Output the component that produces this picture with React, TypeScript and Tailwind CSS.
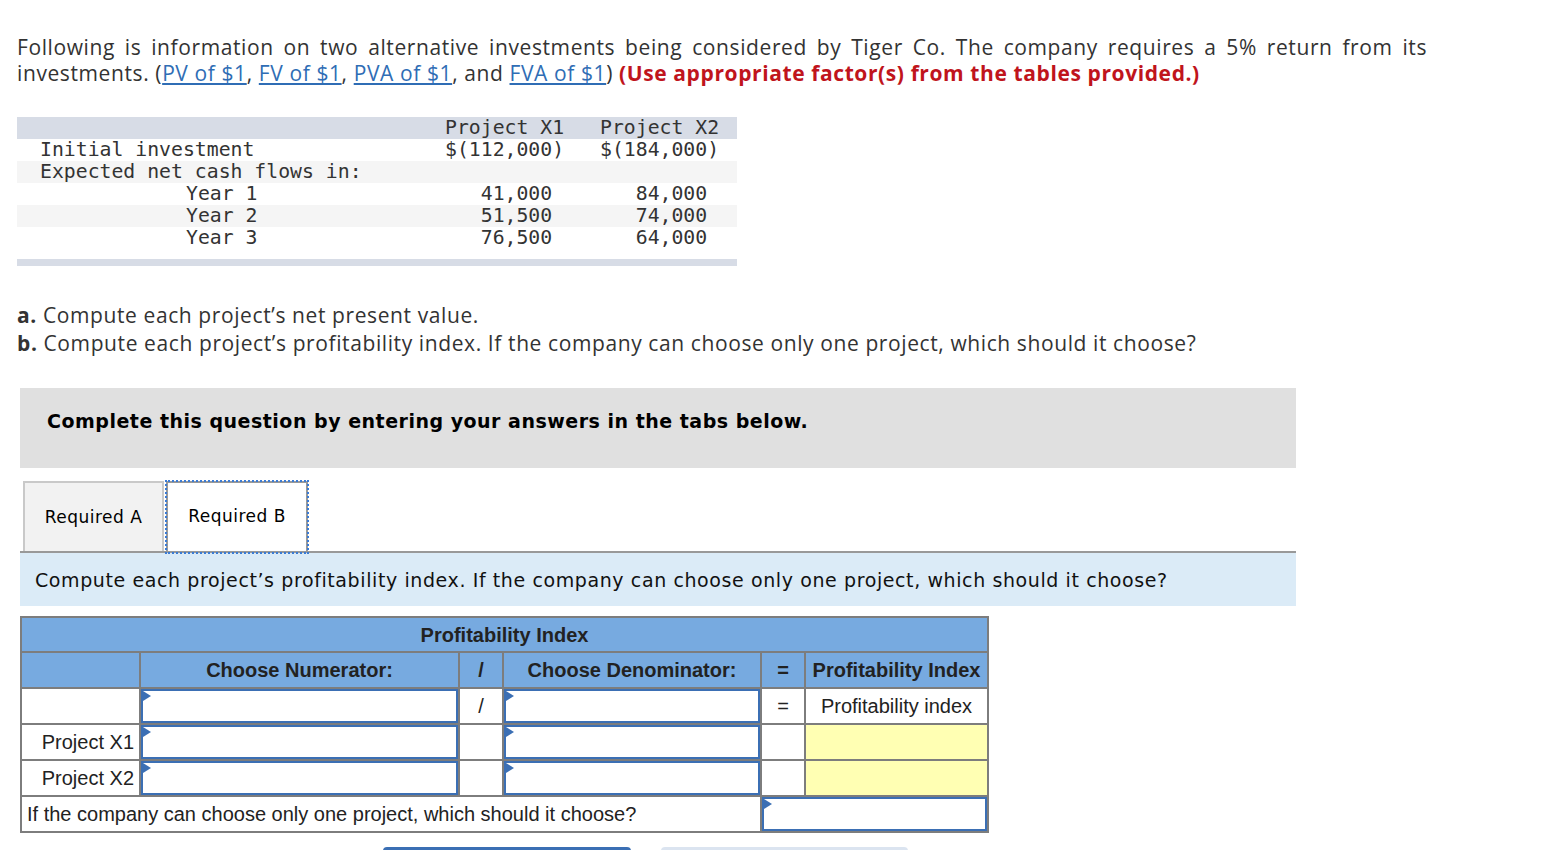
// Tiger Co. investments question - Required B tab

const rows = [
  { label: 'Initial investment', indent: 'pl-[23px]', x1: '$(112,000)', x2: '$(184,000)', bg: 'bg-white' },
  { label: 'Expected net cash flows in:', indent: 'pl-[23px]', x1: '', x2: '', bg: 'bg-[#f5f5f5]' },
  { label: 'Year 1', indent: 'pl-[169px]', x1: '   41,000', x2: '   84,000', bg: 'bg-white' },
  { label: 'Year 2', indent: 'pl-[169px]', x1: '   51,500', x2: '   74,000', bg: 'bg-[#f5f5f5]' },
  { label: 'Year 3', indent: 'pl-[169px]', x1: '   76,500', x2: '   64,000', bg: 'bg-white' },
];

function Pick({ className = '' }: { className?: string }) {
  return (
    <div className={`relative h-[34px] border-2 border-[#3b6fb4] bg-white ${className}`}>
      <span className="absolute left-0 top-0 w-0 h-0 border-y-[5px] border-y-transparent border-l-[8px] border-l-[#3b6fb4]" />
    </div>
  );
}

export default function App() {
  return (
    <div className="h-[850px] overflow-hidden bg-white pl-[17px] pt-[34px] text-[#333]">
      {/* question text */}
      <div className="w-[1410px] [font-family:'Open_Sans',sans-serif] text-[21px] leading-[26px] tracking-[0.6px]">
        <div className="text-justify [text-align-last:justify]">
          Following is information on two alternative investments being considered by Tiger Co. The company requires a 5% return from its
        </div>
        <div>
          investments. (<a className="text-[#2f6db5] underline">PV of $1</a>, <a className="text-[#2f6db5] underline">FV of $1</a>,{' '}
          <a className="text-[#2f6db5] underline">PVA of $1</a>, and <a className="text-[#2f6db5] underline">FVA of $1</a>){' '}
          <span className="font-bold text-[#c0141c]">(Use appropriate factor(s) from the tables provided.)</span>
        </div>
      </div>

      {/* data table */}
      <div className="mt-[31px] w-[720px] [font-family:'DejaVu_Sans_Mono',monospace] text-[19.8px] leading-[22px] text-[#333] whitespace-pre">
        <div className="flex h-[22px] bg-[#d7dce6]">
          <div className="w-[428px]" />
          <div className="w-[155px]">Project X1</div>
          <div className="flex-1">Project X2</div>
        </div>
        {rows.map((r) => (
          <div key={r.label} className={`flex h-[22px] ${r.bg}`}>
            <div className={`w-[428px] ${r.indent}`}>{r.label}</div>
            <div className="w-[155px]">{r.x1}</div>
            <div className="flex-1">{r.x2}</div>
          </div>
        ))}
        <div className="h-[10px]" />
        <div className="h-[7px] bg-[#d7dce6]" />
      </div>

      {/* parts */}
      <div className="mt-[35px] [font-family:'Open_Sans',sans-serif] text-[21px] leading-[28px] tracking-[0.6px]">
        <p><b>a.</b> Compute each project’s net present value.</p>
        <p><b>b.</b> Compute each project’s profitability index. If the company can choose only one project, which should it choose?</p>
      </div>

      {/* answer area */}
      <div className="ml-[3px] w-[1276px] mt-[31px] [font-family:'DejaVu_Sans',Verdana,sans-serif] text-black">
        <div className="h-[80px] bg-[#e0e0e0] pl-[27px] pt-[23px] font-bold text-[19px] leading-[20px] tracking-[0.5px]">
          Complete this question by entering your answers in the tabs below.
        </div>

        <div className="mt-[13px] flex items-end pl-[3px] border-b-2 border-[#999]">
          <div className="w-[141px] h-[70px] bg-[#f2f2f2] border-2 border-b-0 border-[#c9c9c9] flex items-center justify-center pt-[2px] text-[17px] tracking-[0.5px]">
            Required A
          </div>
          <div className="ml-[2px] w-[142px] h-[72px] -mb-[2px] outline-2 outline-dotted outline-[#3a7bd5] -outline-offset-1 border-2 border-[#999] bg-white flex items-center justify-center text-[17px] tracking-[0.5px]">
            Required B
          </div>
        </div>

        <div className="h-[53px] bg-[#dbebf7] pl-[15px] flex items-center pt-[2px] text-[19px] tracking-[0.6px] text-[#111]">
          Compute each project’s profitability index. If the company can choose only one project, which should it choose?
        </div>
      </div>

      {/* profitability index table */}
      <table className="ml-[3px] mt-[10px] w-[967px] table-fixed border-collapse border-2 border-[#7d7d7d] [font-family:'Liberation_Sans',Arial,sans-serif] text-[20px] text-[#222]">
        <colgroup>
          <col className="w-[119px]" />
          <col className="w-[319px]" />
          <col className="w-[44px]" />
          <col className="w-[258px]" />
          <col className="w-[44px]" />
          <col className="w-[183px]" />
        </colgroup>
        <tbody>
          <tr className="h-[35px] bg-[#77aae0]">
            <td colSpan={6} className="text-center font-bold border-2 border-[#7d7d7d]">Profitability Index</td>
          </tr>
          <tr className="h-[36px] bg-[#77aae0] font-bold">
            <td className="border-2 border-[#7d7d7d]" />
            <td className="border-2 border-[#7d7d7d] text-center">Choose Numerator:</td>
            <td className="border-2 border-[#7d7d7d] text-center">/</td>
            <td className="border-2 border-[#7d7d7d] text-center">Choose Denominator:</td>
            <td className="border-2 border-[#7d7d7d] text-center">=</td>
            <td className="border-2 border-[#7d7d7d] text-center">Profitability Index</td>
          </tr>
          <tr className="h-[36px]">
            <td className="border-2 border-[#7d7d7d]" />
            <td className="border-2 border-[#7d7d7d] p-0"><Pick /></td>
            <td className="border-2 border-[#7d7d7d] text-center">/</td>
            <td className="border-2 border-[#7d7d7d] p-0"><Pick /></td>
            <td className="border-2 border-[#7d7d7d] text-center">=</td>
            <td className="border-2 border-[#7d7d7d] text-center">Profitability index</td>
          </tr>
          {['Project X1', 'Project X2'].map((p) => (
            <tr key={p} className="h-[36px]">
              <td className="border-2 border-[#7d7d7d] text-right pr-[5px]">{p}</td>
              <td className="border-2 border-[#7d7d7d] p-0"><Pick /></td>
              <td className="border-2 border-[#7d7d7d]" />
              <td className="border-2 border-[#7d7d7d] p-0"><Pick /></td>
              <td className="border-2 border-[#7d7d7d]" />
              <td className="border-2 border-[#7d7d7d] bg-[#ffffb3]" />
            </tr>
          ))}
          <tr className="h-[34px]">
            <td colSpan={4} className="border-2 border-[#7d7d7d] pl-[5px]">If the company can choose only one project, which should it choose?</td>
            <td colSpan={2} className="border-2 border-[#7d7d7d] p-0"><Pick className="h-[32px]" /></td>
          </tr>
        </tbody>
      </table>

      {/* nav buttons */}
      <div className="mt-[14px] flex gap-[30px] pl-[366px]">
        <div className="w-[248px] h-[40px] rounded-[4px] bg-[#3b6fb4]" />
        <div className="w-[247px] h-[40px] rounded-[4px] bg-[#dbe4f0]" />
      </div>
    </div>
  );
}
